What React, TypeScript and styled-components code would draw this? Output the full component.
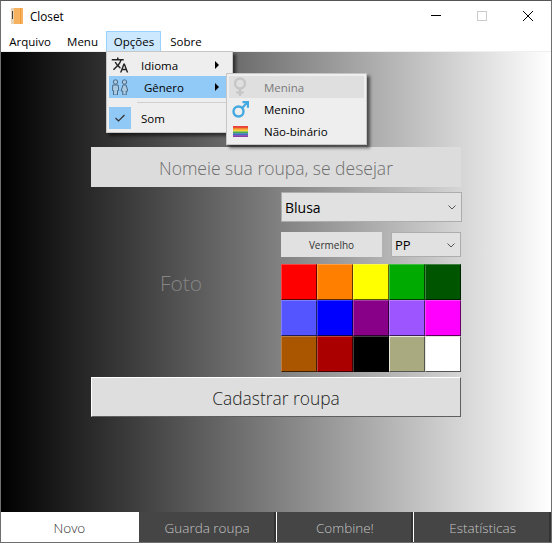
import React from 'react';
import styled, { createGlobalStyle } from 'styled-components';
import { MdTranslate } from 'react-icons/md';

const UI_FONT = '"Open Sans", "Noto Sans", "Liberation Sans", sans-serif';

const GlobalStyle = createGlobalStyle`
  html, body {
    margin: 0;
    padding: 0;
    background: #fff;
    font-family: ${UI_FONT};
  }
  * { box-sizing: border-box; }
`;

const Window = styled.div`
  position: relative;
  width: 552px;
  height: 543px;
  display: flex;
  flex-direction: column;
  border: 1px solid #6f6f6f;
  border-top-color: #555;
  background: #fff;
  overflow: hidden;
`;

const TitleBar = styled.div`
  height: 30px;
  flex: none;
  display: flex;
  align-items: center;
  padding-left: 10px;
  font-size: 11.7px;
  color: #000;
`;

const TitleText = styled.span`
  flex: 1;
  margin-left: 7px;
`;

const WinButton = styled.div`
  width: 46px;
  height: 30px;
  display: grid;
  place-items: center;
`;

const MenuBar = styled.div`
  height: 21px;
  flex: none;
  display: flex;
  border-bottom: 1px solid #efefef;
`;

const MenuItem = styled.div<{ $open?: boolean; $w: number }>`
  width: ${(p) => p.$w}px;
  height: 21px;
  display: flex;
  align-items: center;
  justify-content: center;
  font-size: 11.5px;
  color: #000;
  padding-left: ${(p) => (p.$open ? 1 : 0)}px;
  background: ${(p) => (p.$open ? '#cce8ff' : 'transparent')};
  border: 1px solid ${(p) => (p.$open ? '#99d1ff' : 'transparent')};
`;

const Content = styled.main`
  flex: 1;
  background: linear-gradient(to right, #000 0%, #fff 100%);
  padding: 95px 0 0 90px;
`;

const Form = styled.div`
  width: 370px;
  display: grid;
  grid-template-columns: 190px 180px;
  grid-template-rows: 40px auto 40px;
  row-gap: 5px;
`;

const NameField = styled.div`
  grid-column: 1 / -1;
  background: #dcdcdc;
  color: #6e6e6e;
  font-size: 17.5px;
  font-weight: 300;
  padding-top: 2px;
  display: flex;
  align-items: center;
  justify-content: center;
`;

const PhotoArea = styled.div`
  display: flex;
  align-items: center;
  justify-content: center;
  color: #858585;
  font-size: 21px;
  font-weight: 300;
  padding: 2px 10px 0 0;
`;

const SideColumn = styled.div`
  display: flex;
  flex-direction: column;
`;

const Select = styled.div<{ $h: number; $size: number; $w: number }>`
  height: ${(p) => p.$h}px;
  width: ${(p) => p.$w}px;
  flex: none;
  background: #e1e1e1;
  border: 1px solid #adadad;
  display: flex;
  align-items: center;
  justify-content: space-between;
  padding: 1px 5px 0 3px;
  font-size: ${(p) => p.$size}px;
  color: #000;
`;

const Row = styled.div`
  display: flex;
  justify-content: space-between;
  margin: 10px 0 7px;
`;

const ColorName = styled.div`
  width: 101px;
  height: 25px;
  background: #e1e1e1;
  font-size: 10px;
  color: #333;
  display: flex;
  align-items: center;
  justify-content: center;
`;

const Palette = styled.div`
  display: grid;
  grid-template-columns: repeat(5, 36px);
  grid-auto-rows: 36px;
`;

const Swatch = styled.div<{ $color: string; $light?: boolean }>`
  background: ${(p) => p.$color};
  border: 1px solid;
  border-color: ${(p) => (p.$light ? '#e8e8d8' : 'rgba(255,255,255,0.25)')}
    ${(p) => (p.$light ? '#555' : 'rgba(0,0,0,0.6)')}
    ${(p) => (p.$light ? '#555' : 'rgba(0,0,0,0.65)')}
    ${(p) => (p.$light ? '#e8e8d8' : 'rgba(255,255,255,0.25)')};
`;

const SubmitButton = styled.div`
  grid-column: 1 / -1;
  background: #dedede;
  border: 1px solid;
  border-color: #fff #5f5f5f #5f5f5f #fff;
  color: #222;
  font-size: 17.4px;
  font-weight: 300;
  padding-top: 2px;
  display: flex;
  align-items: center;
  justify-content: center;
`;

const Tabs = styled.nav`
  height: 30px;
  flex: none;
  display: grid;
  grid-template-columns: repeat(4, 1fr);
  column-gap: 1px;
  background: #fff;
`;

const Tab = styled.div<{ $active?: boolean }>`
  background: ${(p) => (p.$active ? '#fff' : '#454545')};
  color: ${(p) => (p.$active ? '#333' : '#c4c4c4')};
  font-size: 13.5px;
  font-weight: 300;
  display: flex;
  align-items: center;
  justify-content: center;
  padding-top: 2px;
  box-shadow: ${(p) => (p.$active ? 'none' : 'inset -2px 0 0 #333')};
`;

const Popup = styled.div<{ $left: number; $top: number; $w: number; $h: number }>`
  position: absolute;
  left: ${(p) => p.$left}px;
  top: ${(p) => p.$top}px;
  width: ${(p) => p.$w}px;
  height: ${(p) => p.$h}px;
  background: #eeeeee;
  border: 1px solid #c6c6c6;
  padding: 2px;
  box-shadow: 3px 3px 3px rgba(0, 0, 0, 0.55);
  display: flex;
  flex-direction: column;
  font-size: 11.5px;
`;

const PopupItem = styled.div<{ $bg?: string; $color?: string }>`
  height: 22px;
  flex: none;
  display: flex;
  align-items: center;
  position: relative;
  background: ${(p) => p.$bg ?? 'transparent'};
  color: ${(p) => p.$color ?? '#000'};
`;

const IconSlot = styled.span<{ $bg?: string }>`
  width: 22px;
  height: 22px;
  flex: none;
  display: grid;
  place-items: center;
  background: ${(p) => p.$bg ?? 'transparent'};
`;

const ItemLabel = styled.span<{ $indent: number }>`
  margin-left: ${(p) => p.$indent}px;
`;

const Arrow = styled.span`
  position: absolute;
  right: 11px;
  top: 7px;
  width: 0;
  height: 0;
  border-left: 4px solid #000;
  border-top: 4px solid transparent;
  border-bottom: 4px solid transparent;
`;

const Separator = styled.div`
  height: 1px;
  margin: 4px 0 4px 28px;
  background: #cfcfcf;
  flex: none;
`;

function Chevron() {
  return (
    <svg width="8" height="5" viewBox="0 0 8 5">
      <path d="M.5.5L4 4 7.5.5" fill="none" stroke="#555" strokeWidth="1" />
    </svg>
  );
}

function AppIcon() {
  return (
    <svg width="12" height="16" viewBox="0 0 12 16">
      <rect width="12" height="16" fill="#f7b25f" />
      <rect x="0" width="3" height="16" fill="#e8d3b4" />
      <rect x="1" y="3" width="1" height="8" fill="#444" />
      <rect x="9" width="1" height="16" fill="#f09a3c" />
    </svg>
  );
}

function PersonOutline({ x, skirt }: { x: number; skirt?: boolean }) {
  return (
    <g fill="#a9c8e2" stroke="#4d6b85" strokeWidth="1" transform={`translate(${x} 0)`}>
      <circle cx="3.5" cy="3" r="2.2" />
      <path
        d={
          skirt
            ? 'M2 6h3l2 6H5.2v4H1.8v-4H0z'
            : 'M.8 6h5.4l.5 5.5H5.5V16h-4v-4.5H.3z'
        }
      />
    </g>
  );
}

function GenderIcon() {
  return (
    <svg width="16" height="16" viewBox="0 0 16 16">
      <PersonOutline x={0} />
      <PersonOutline x={9} skirt />
    </svg>
  );
}

function FemaleIcon() {
  return (
    <svg width="16" height="20" viewBox="0 0 16 20">
      <circle cx="8" cy="6.5" r="5" fill="none" stroke="#c6c6c6" strokeWidth="2.4" />
      <path d="M8 11.5V19M4.5 15.5h7" stroke="#c6c6c6" strokeWidth="2.4" />
    </svg>
  );
}

function MaleIcon() {
  return (
    <svg width="17" height="17" viewBox="0 0 17 17">
      <circle cx="6.5" cy="10.5" r="5" fill="none" stroke="#44a9e0" strokeWidth="2.4" />
      <path d="M10 7l5-5M10.5 1.2H16V6.7" fill="none" stroke="#44a9e0" strokeWidth="2.2" />
    </svg>
  );
}

function RainbowIcon() {
  const stripes = ['#e8403a', '#f28a2e', '#f5d33c', '#45ad4e', '#3f6fc9', '#8a3fa8'];
  return (
    <svg width="15" height="11" viewBox="0 0 15 11">
      {stripes.map((c, i) => (
        <rect key={c} x="0" y={(i * 11) / 6} width="15" height={11 / 6 + 0.2} fill={c} />
      ))}
    </svg>
  );
}

const SWATCHES = [
  '#ff0000', '#ff7f00', '#ffff00', '#00aa00', '#005500',
  '#5555ff', '#0000ff', '#880088', '#9d55ff', '#ff00ff',
  '#aa5500', '#aa0000', '#000000', '#aaaa80', '#ffffff',
];

export default function App() {
  return (
    <>
      <GlobalStyle />
      <Window>
        <TitleBar>
          <AppIcon />
          <TitleText>Closet</TitleText>
          <WinButton>
            <svg width="10" height="2" viewBox="0 0 10 2">
              <rect width="10" height="1" fill="#000" />
            </svg>
          </WinButton>
          <WinButton>
            <svg width="10" height="10" viewBox="0 0 10 10">
              <rect x=".5" y=".5" width="9" height="9" fill="none" stroke="#ccc" />
            </svg>
          </WinButton>
          <WinButton>
            <svg width="10" height="10" viewBox="0 0 10 10">
              <path d="M0 0l10 10M10 0L0 10" stroke="#000" strokeWidth="1" />
            </svg>
          </WinButton>
        </TitleBar>
        <MenuBar>
          <MenuItem $w={58}>Arquivo</MenuItem>
          <MenuItem $w={47}>Menu</MenuItem>
          <MenuItem $w={55} $open>
            Opções
          </MenuItem>
          <MenuItem $w={50}>Sobre</MenuItem>
        </MenuBar>
        <Content>
          <Form>
            <NameField>Nomeie sua roupa, se desejar</NameField>
            <PhotoArea>Foto</PhotoArea>
            <SideColumn>
              <Select $h={30} $size={14} $w={181}>
                Blusa
                <Chevron />
              </Select>
              <Row>
                <ColorName>Vermelho</ColorName>
                <Select $h={25} $size={13} $w={70}>
                  PP
                  <Chevron />
                </Select>
              </Row>
              <Palette>
                {SWATCHES.map((c) => (
                  <Swatch key={c} $color={c} $light={c === '#aaaa80' || c === '#ffffff'} />
                ))}
              </Palette>
            </SideColumn>
            <SubmitButton>Cadastrar roupa</SubmitButton>
          </Form>
        </Content>
        <Tabs>
          <Tab $active>Novo</Tab>
          <Tab>Guarda roupa</Tab>
          <Tab>Combine!</Tab>
          <Tab>Estatísticas</Tab>
        </Tabs>

        <Popup $left={105} $top={50} $w={127} $h={82}>
          <PopupItem>
            <IconSlot>
              <MdTranslate size={18} color="#222" />
            </IconSlot>
            <ItemLabel $indent={10}>Idioma</ItemLabel>
            <Arrow />
          </PopupItem>
          <PopupItem $bg="#91c9f7">
            <IconSlot>
              <GenderIcon />
            </IconSlot>
            <ItemLabel $indent={13}>Gênero</ItemLabel>
            <Arrow />
          </PopupItem>
          <Separator />
          <PopupItem>
            <IconSlot $bg="#90c8f6">
              <svg width="10" height="8" viewBox="0 0 10 8">
                <path d="M.5 4l3 3 6-6" fill="none" stroke="#333" strokeWidth="1.2" />
              </svg>
            </IconSlot>
            <ItemLabel $indent={10}>Som</ItemLabel>
          </PopupItem>
        </Popup>

        <Popup $left={225} $top={72} $w={141} $h={72}>
          <PopupItem $bg="#dfdfdf" $color="#7a7a7a">
            <IconSlot>
              <FemaleIcon />
            </IconSlot>
            <ItemLabel $indent={13}>Menina</ItemLabel>
          </PopupItem>
          <PopupItem>
            <IconSlot>
              <MaleIcon />
            </IconSlot>
            <ItemLabel $indent={13}>Menino</ItemLabel>
          </PopupItem>
          <PopupItem>
            <IconSlot>
              <RainbowIcon />
            </IconSlot>
            <ItemLabel $indent={13}>Não-binário</ItemLabel>
          </PopupItem>
        </Popup>
      </Window>
    </>
  );
}
